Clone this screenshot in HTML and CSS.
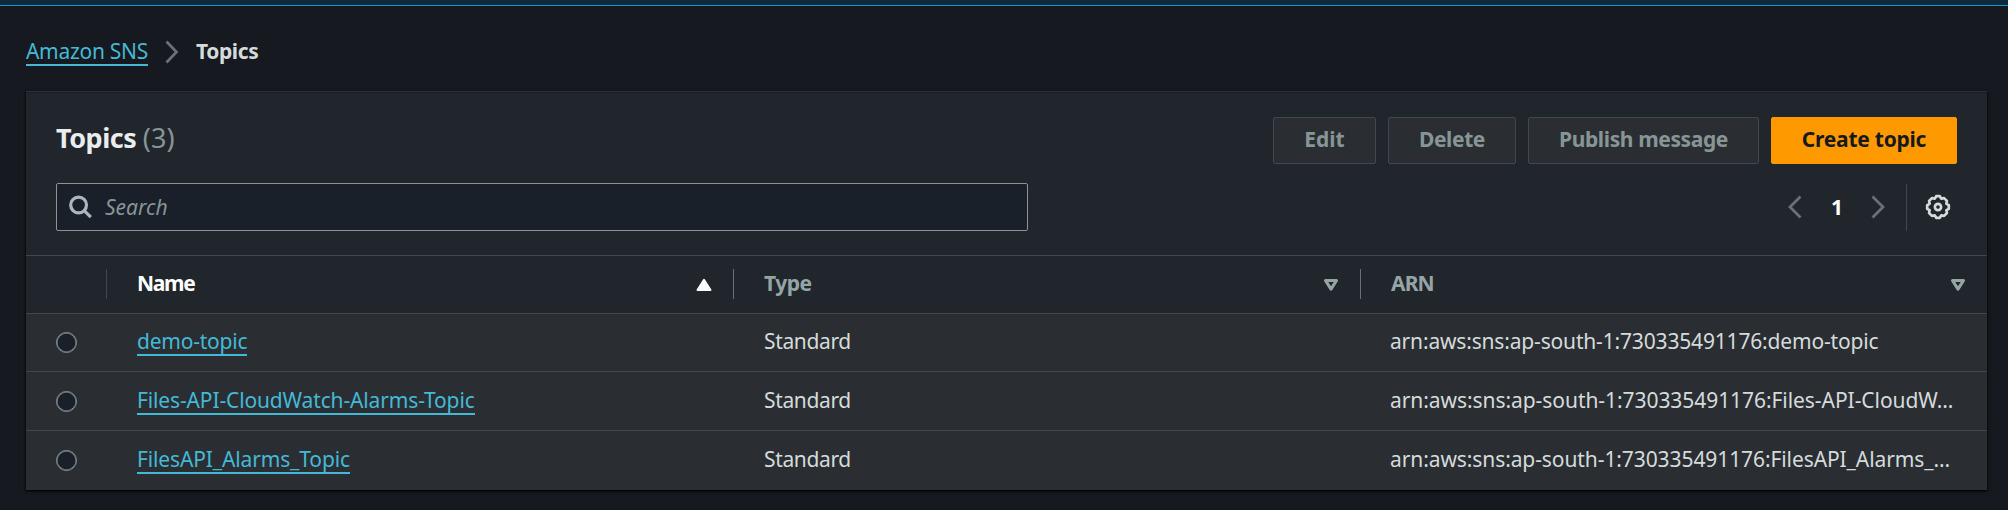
FILE: index.html
```html
<!DOCTYPE html>
<html lang="en">
<head>
<meta charset="utf-8">
<title>Topics</title>
<link rel="stylesheet" href="styles.css">
</head>
<body>
<div class="topbar"></div>
<main class="page">
  <nav class="crumbs">
    <a class="link crumb-link">Amazon SNS</a>
    <svg class="crumb-sep" width="14" height="24" viewBox="0 0 14 24"><path d="M1.5 1.5 L11.5 12 L1.5 22.5" fill="none" stroke="#687078" stroke-width="2.8"/></svg>
    <span class="crumb-current">Topics</span>
  </nav>
  <section class="panel">
    <header class="panel-head">
      <h1 class="title">Topics <span class="count">(3)</span></h1>
      <div class="actions">
        <button class="btn btn-edit">Edit</button>
        <button class="btn btn-delete">Delete</button>
        <button class="btn btn-publish">Publish message</button>
        <button class="btn btn-primary">Create topic</button>
      </div>
    </header>
    <div class="tools">
      <div class="search">
        <svg width="24" height="24" viewBox="0 0 24 24" fill="none" stroke="#aab7b8" stroke-width="3.2"><circle cx="9.6" cy="10" r="7.9"/><path d="M15.2 15.6 L21.8 22.2"/></svg>
        <span class="placeholder">Search</span>
      </div>
      <div class="pager">
        <svg class="prev" width="14" height="24" viewBox="0 0 14 24"><path d="M12.5 1.5 L2 12 L12.5 22.5" fill="none" stroke="#687078" stroke-width="2.8"/></svg>
        <span class="page-num">1</span>
        <svg class="next" width="14" height="24" viewBox="0 0 14 24"><path d="M1.5 1.5 L12 12 L1.5 22.5" fill="none" stroke="#687078" stroke-width="2.8"/></svg>
        <span class="rule"></span>
        <svg class="gear" width="26" height="26" viewBox="-13 -13 26 26" fill="none" stroke="#d5dbdb" stroke-width="2.7" stroke-linejoin="round"><path d="M-1.8 -10.8 L1.8 -10.8 L3.2 -8.4 L6.1 -8.9 L8.9 -6.1 L8.4 -3.2 L10.8 -1.8 L10.8 1.8 L8.4 3.2 L8.9 6.1 L6.1 8.9 L3.2 8.4 L1.8 10.8 L-1.8 10.8 L-3.2 8.4 L-6.1 8.9 L-8.9 6.1 L-8.4 3.2 L-10.8 1.8 L-10.8 -1.8 L-8.4 -3.2 L-8.9 -6.1 L-6.1 -8.9 L-3.2 -8.4 Z"/><circle r="3.1"/></svg>
      </div>
    </div>
    <div class="table">
      <div class="row head">
        <div class="cell pick"></div>
        <div class="cell th sorted"><span class="label-name">Name</span><svg width="16" height="14" viewBox="0 0 16 14"><path d="M8 1.8 L14.5 12 L1.5 12 Z" fill="#fafafa" stroke="#fafafa" stroke-width="2" stroke-linejoin="round"/></svg></div>
        <div class="cell th"><span>Type</span><svg width="16" height="14" viewBox="0 0 16 14"><path d="M2.5 2.5 L13.5 2.5 L8 11.2 Z" fill="none" stroke="#95a5a6" stroke-width="3.1" stroke-linejoin="round"/></svg></div>
        <div class="cell th last"><span class="label-arn">ARN</span><svg width="16" height="14" viewBox="0 0 16 14"><path d="M2.5 2.5 L13.5 2.5 L8 11.2 Z" fill="none" stroke="#95a5a6" stroke-width="3.1" stroke-linejoin="round"/></svg></div>
      </div>
      <div class="row first">
        <div class="cell pick"><span class="radio"></span></div>
        <div class="cell"><a class="link link-demo">demo-topic</a></div>
        <div class="cell std">Standard</div>
        <div class="cell arn">arn:aws:sns:ap-south-1:730335491176:demo-topic</div>
      </div>
      <div class="row">
        <div class="cell pick"><span class="radio"></span></div>
        <div class="cell"><a class="link">Files-API-CloudWatch-Alarms-Topic</a></div>
        <div class="cell std">Standard</div>
        <div class="cell arn arn-tight">arn:aws:sns:ap-south-1:730335491176:Files-API-CloudW…</div>
      </div>
      <div class="row final">
        <div class="cell pick"><span class="radio"></span></div>
        <div class="cell"><a class="link">FilesAPI_Alarms_Topic</a></div>
        <div class="cell std">Standard</div>
        <div class="cell arn arn-last">arn:aws:sns:ap-south-1:730335491176:FilesAPI_Alarms_…</div>
      </div>
    </div>
  </section>
</main>
</body>
</html>
```
FILE: styles.css
```css
* { box-sizing: border-box; }

body {
  margin: 0;
  height: 510px;
  overflow: hidden;
  background: #16191f;
  color: #d5dbdb;
  font: 21px/26px "Noto Sans", sans-serif;
}

svg { display: block; flex: none; }

.topbar {
  height: 6px;
  background: #12283c;
  border-bottom: 1px solid #00a1c9;
}

.page { padding: 32px 20px 0 26px; }

.link {
  display: inline-block;
  color: #44b9d6;
  border-bottom: 2px solid #44b9d6;
  letter-spacing: -0.14px;
  white-space: nowrap;
}

.link-demo { letter-spacing: -0.22px; }

.crumbs { display: flex; align-items: flex-start; height: 53px; }
.crumb-link { width: 122px; letter-spacing: -0.3px; }
.crumb-sep { margin: 2px 17px 0; }
.crumb-current { font-weight: 700; letter-spacing: -0.4px; }

.panel {
  width: 1961px;
  height: 399px;
  background: #21252c;
  border-top: 1px solid #2f3338;
  box-shadow: 0 1px 1px rgba(0, 0, 0, 0.5), 1px 1px 3px rgba(0, 0, 0, 0.5), -1px 1px 2px rgba(0, 0, 0, 0.4);
}

.panel-head {
  display: flex;
  justify-content: space-between;
  height: 91px;
  padding: 24px 30px 0;
  border-top: 1px solid #191c22;
}

.title {
  margin: 3px 0 0;
  color: #eaeded;
  font-size: 27px;
  line-height: 36px;
  font-weight: 700;
  letter-spacing: -0.5px;
}

.count { color: #879596; font-weight: 400; letter-spacing: 0.1px; }

.actions { display: flex; gap: 12px; }

.btn {
  height: 47px;
  padding: 0 0 3px;
  border: 1px solid #414750;
  border-radius: 2px;
  background: #2a2e33;
  color: #879596;
  font: 700 21px/26px "Noto Sans", sans-serif;
  letter-spacing: -0.38px;
  white-space: nowrap;
}

.btn-edit { width: 103px; letter-spacing: 0; }
.btn-delete { width: 128px; }
.btn-publish { width: 231px; }
.btn-primary { width: 186px; background: #ff9900; border-color: #ff9900; color: #16191f; letter-spacing: -0.25px; }

.tools {
  display: flex;
  justify-content: space-between;
  height: 72px;
  padding: 0 36px 0 30px;
}

.search {
  display: flex;
  align-items: center;
  width: 972px;
  height: 48px;
  padding-left: 12px;
  border: 1px solid #879596;
  border-radius: 2px;
  background: #1a2029;
}

.placeholder {
  margin: -1px 0 0 12px;
  color: #879596;
  font-style: italic;
  letter-spacing: 0;
}

.pager { display: flex; align-items: center; height: 48px; }
.page-num { width: 12px; margin: -1px 28px 0 29px; color: #fff; font-weight: 700; }
.next { margin-right: 1px; }
.rule { width: 1px; height: 47px; margin: 0 18px 0 20px; background: #414750; }

.row {
  display: grid;
  grid-template-columns: 81px 627px 627px 626px;
  height: 59px;
  background: #2a2e33;
  border-bottom: 1px solid #414750;
}

.head { background: #21252c; border-top: 1px solid #414750; }
.first { height: 58px; }
.final { border-bottom: 0; }

.cell { height: 56px; padding: 15px 0 0 30px; white-space: nowrap; }
.row:not(.head) .pick { padding-top: 19px; }
.first .cell { padding-top: 14px; }
.row.first .pick { padding-top: 18px; }
.row .std { padding-left: 30px; letter-spacing: -0.35px; }
.row .arn { padding-left: 29px; letter-spacing: -0.17px; }
.row .arn-tight { letter-spacing: -0.06px; }
.row .arn-last { letter-spacing: -0.09px; }

.row .th {
  display: flex;
  justify-content: space-between;
  height: 30px;
  margin-top: 13px;
  padding: 1px 21px 0 30px;
  border-right: 1px solid #687078;
  color: #95a5a6;
  font-weight: 700;
  letter-spacing: -0.5px;
}

.th svg { margin-top: 8px; }
.head .pick { height: 30px; margin-top: 13px; border-right: 1px solid #414750; }
.row .sorted { color: #fff; }
.label-name { letter-spacing: -1.3px; }
.label-arn { letter-spacing: -0.9px; }
.row .last { border-right: 0; }

.radio {
  display: block;
  width: 21px;
  height: 21px;
  border: 1px solid #879596;
  box-shadow: inset 0 0 0 0.5px #879596;
  border-radius: 50%;
  background: #1a2029;
}
```
